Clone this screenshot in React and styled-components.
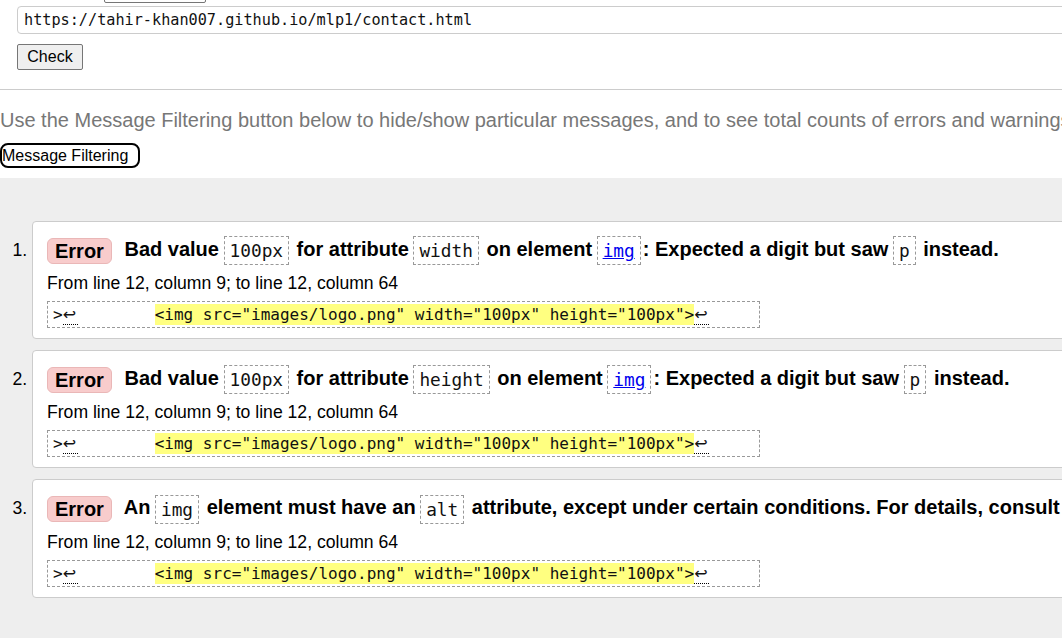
import React from "react";
import styled, { createGlobalStyle } from "styled-components";

const Global = createGlobalStyle`
  html, body { margin: 0; padding: 0; overflow: hidden; background: #fff; }
  body { font-family: "Liberation Sans", Arial, sans-serif; color: #000; }
`;

const Page = styled.div`
  width: 1500px;
  min-height: 642px;
  background: #eee;
`;

const Top = styled.div`
  background: #fff;
  padding-bottom: 10px;
`;

const Form = styled.form`
  padding-left: 17px;
`;

const ByRow = styled.div`
  display: flex;
  align-items: center;
  gap: 7px;
  height: 22px;
  margin-top: -19px;
  padding-left: 13px;
`;

const Label = styled.span`
  font-size: 16px;
  line-height: 22px;
`;

const Select = styled.div`
  box-sizing: border-box;
  width: 102px;
  height: 22px;
  border: 1px solid #767676;
  border-radius: 2px;
  background: #fff;
`;

const UrlInput = styled.div`
  box-sizing: border-box;
  margin-top: 3px;
  width: 1300px;
  height: 28px;
  border: 1px solid #ccc;
  border-radius: 4px;
  padding: 0 6px;
  font-family: "DejaVu Sans Mono", monospace;
  font-size: 15.2px;
  line-height: 26px;
  color: #111;
`;

const CheckButton = styled.button`
  box-sizing: border-box;
  display: block;
  margin-top: 10px;
  height: 26px;
  width: 66px;
  padding: 0;
  font-family: "Liberation Sans", Arial, sans-serif;
  font-size: 16px;
  color: #000;
  background: #efefef;
  border: 1px solid #767676;
  border-radius: 2px;
`;

const Rule = styled.hr`
  margin: 19px 0 0;
  border: 0;
  border-top: 1px solid #ccc;
`;

const Intro = styled.p`
  margin: 18px 0 0;
  font-size: 20px;
  line-height: 24px;
  color: #777;
  white-space: nowrap;
`;

const FilterButton = styled.button`
  box-sizing: border-box;
  display: block;
  margin-top: 11px;
  height: 25px;
  width: 140px;
  padding: 0;
  text-align: left;
  font-family: "Liberation Sans", Arial, sans-serif;
  font-size: 16px;
  color: #000;
  background: #fff;
  border: 2px solid #000;
  border-radius: 8px;
`;

const List = styled.ol`
  margin: 0;
  padding: 43px 0 40px 32px;
  display: flex;
  flex-direction: column;
  gap: 11px;
`;

const Card = styled.li`
  background: #fff;
  border: 1px solid #ccc;
  border-radius: 4px;
  padding: 14px 14px 10px;
  font-size: 17.6px;
`;

const Title = styled.div`
  font-size: 20px;
  font-weight: bold;
  line-height: 27px;
  white-space: nowrap;
`;

const Badge = styled.strong`
  display: inline-block;
  vertical-align: middle;
  box-sizing: border-box;
  height: 26px;
  line-height: 24px;
  padding: 0 7px;
  margin-right: 7px;
  background: #f8cccc;
  border: 1px solid #eab7b7;
  border-radius: 6px;
`;

const Code = styled.code`
  display: inline-block;
  vertical-align: middle;
  box-sizing: border-box;
  height: 29px;
  line-height: 27px;
  padding: 0 5px;
  margin: 0 2px 0 -1px;
  border: 1px dashed #999;
  font-family: "DejaVu Sans Mono", monospace;
  font-size: 17.8px;
  font-weight: normal;
  color: #111;
  a { color: #00e; }
`;

const Location = styled.p`
  margin: 7px 0 0;
  line-height: 22px;
`;

const Extract = styled.pre`
  display: inline-block;
  margin: 7px 0 0;
  padding: 2px 50px 2px 5px;
  line-height: 21px;
  border: 1px dashed #999;
  font-family: "DejaVu Sans Mono", monospace;
  font-size: 16px;
  color: #111;
`;

const Break = styled.abbr`
  display: inline-block;
  width: 15px;
  line-height: 18px;
  font-family: "DejaVu Sans", sans-serif;
  text-decoration: none;
  border-bottom: 1px dotted #000;
`;

const Mark = styled.mark`
  background: #ffff80;
  color: #111;
  padding: 1px 0;
`;

const snippet = '<img src="images/logo.png" width="100px" height="100px">';

function ExtractBox() {
  return (
    <div>
      <Extract>
        {">"}
        <Break title="Line break">↩</Break>
        {"        "}
        <Mark>{snippet}</Mark>
        <Break title="Line break">↩</Break>
      </Extract>
    </div>
  );
}

function Message({ children }) {
  return (
    <Card>
      <Title>
        <Badge>Error</Badge> {children}
      </Title>
      <Location>From line 12, column 9; to line 12, column 64</Location>
      <ExtractBox />
    </Card>
  );
}

export default function App() {
  return (
    <>
      <Global />
      <Page>
        <Top>
          <Form onSubmit={(e) => e.preventDefault()}>
            <ByRow>
              <Label>Check by</Label>
              <Select />
            </ByRow>
            <UrlInput>https://tahir-khan007.github.io/mlp1/contact.html</UrlInput>
            <CheckButton type="submit">Check</CheckButton>
          </Form>
          <Rule />
          <Intro>
            Use the Message Filtering button below to hide/show particular messages, and to see total counts of errors and warnings.
          </Intro>
          <FilterButton type="button">Message Filtering</FilterButton>
        </Top>
        <List>
          <Message>
            Bad value <Code>100px</Code> for attribute <Code>width</Code> on element{" "}
            <Code><a href="#img">img</a></Code>: Expected a digit but saw <Code>p</Code> instead.
          </Message>
          <Message>
            Bad value <Code>100px</Code> for attribute <Code>height</Code> on element{" "}
            <Code><a href="#img">img</a></Code>: Expected a digit but saw <Code>p</Code> instead.
          </Message>
          <Message>
            An <Code>img</Code> element must have an <Code>alt</Code> attribute, except under certain conditions. For details, consult guidance on providing text alternatives for images.
          </Message>
        </List>
      </Page>
    </>
  );
}
